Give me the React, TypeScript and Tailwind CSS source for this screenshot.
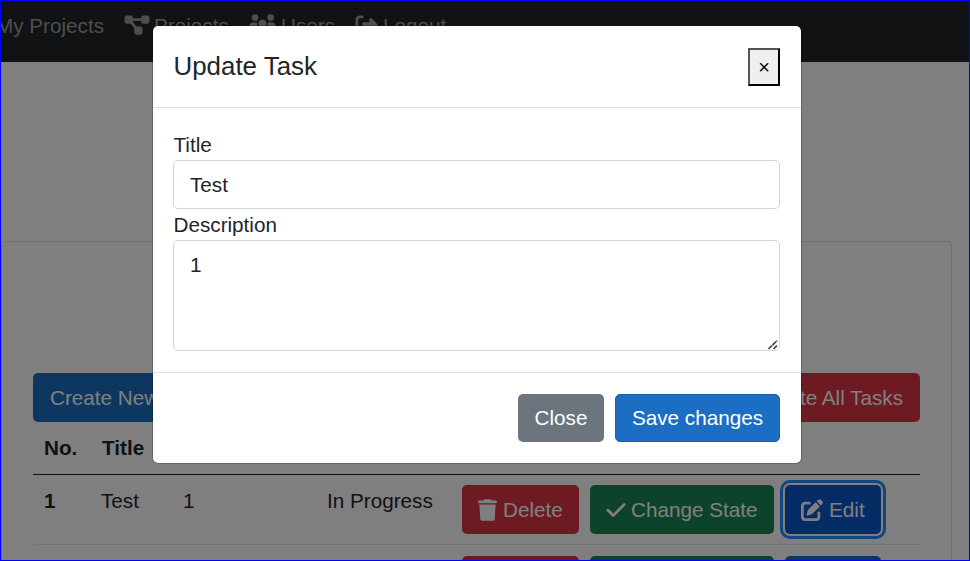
import React from "react";
import {
  FaDiagramProject,
  FaUsers,
  FaRightFromBracket,
  FaTrash,
  FaCheck,
  FaPenToSquare,
} from "react-icons/fa6";

const btn = "flex h-[49px] items-center rounded-[5px] px-[16px] whitespace-nowrap text-white";

function RowActions({ focused }: { focused?: boolean }) {
  return (
    <div className="flex gap-[11px] pt-[10px]">
      <button className={`${btn} w-[117px] bg-[#dc3545]`}>
        <FaTrash className="mr-[6px] h-[22px] w-[19px] shrink-0" />
        Delete
      </button>
      <button className={`${btn} w-[184px] bg-[#198754]`}>
        <FaCheck className="mr-[5px] h-[22px] w-[20px] shrink-0" />
        Change State
      </button>
      <button
        className={
          focused
            ? `${btn} w-[96px] bg-[#0a58ca] shadow-[0_0_0_2px_#fff,0_0_0_5px_#258cfb]`
            : `${btn} w-[96px] bg-[#1b6ec2]`
        }
      >
        <FaPenToSquare className="mr-[6px] h-[22px] w-[22px] shrink-0" />
        Edit
      </button>
    </div>
  );
}

function Page() {
  return (
    <div className="h-[561px] overflow-hidden bg-white">
      <nav className="flex h-[62px] bg-[#212529] pt-[10px] leading-[31px] text-[#9b9d9e]">
        <div className="-ml-[4px] w-[127px] shrink-0 whitespace-nowrap">My Projects</div>
        <div className="flex w-[125px] shrink-0">
          <FaDiagramProject className="mt-[4px] ml-px mr-[4px] h-[22px] w-[26px]" />
          Projects
        </div>
        <div className="flex w-[107px] shrink-0">
          <FaUsers className="mt-[4px] ml-px mr-[5px] h-[22px] w-[27px]" />
          Users
        </div>
        <div className="flex">
          <FaRightFromBracket className="mt-[4px] mr-[5px] h-[22px] w-[23px]" />
          Logout
        </div>
      </nav>
      <main className="pt-[179px]">
        <section className="ml-px h-[420px] w-[951px] rounded-[5px] border border-[#dfdfdf] px-[31px] pt-[131px]">
          <div className="flex justify-between">
            <button className={`${btn} bg-[#1b6ec2] pl-[17px]`}>Create New Task</button>
            <button className={`${btn} bg-[#dc3545] pr-[17px]`}>Delete All Tasks</button>
          </div>
          <div className="grid h-[53px] grid-cols-[58px_83px_143px_137px_466px] border-b border-[#212529] pt-[10px] leading-[31px] font-bold">
            <span className="pl-[11px]">No.</span>
            <span className="pl-[11px]">Title</span>
            <span className="pl-[9px]">Description</span>
            <span className="pl-[9px]">State</span>
            <span />
          </div>
          <div className="grid h-[70px] grid-cols-[58px_83px_143px_145px_458px] border-b border-[#dee2e6] leading-[31px]">
            <span className="pt-[10px] pl-[11px] font-bold">1</span>
            <span className="pt-[10px] pl-[10px]">Test</span>
            <span className="pt-[10px] pl-[9px]">1</span>
            <span className="pt-[10px] pl-[10px]">In Progress</span>
            <RowActions focused />
          </div>
          <div className="grid h-[71px] grid-cols-[58px_83px_143px_145px_458px]">
            <span />
            <span />
            <span />
            <span />
            <div className="pt-px">
              <RowActions />
            </div>
          </div>
        </section>
      </main>
    </div>
  );
}

function UpdateTaskModal() {
  return (
    <div className="absolute top-[25px] left-[152px] flex h-[439px] w-[650px] flex-col rounded-[6px] border border-black/20 bg-white bg-clip-padding">
      <header className="flex h-[82px] shrink-0 items-start justify-between border-b border-[#dee2e6] px-[20px] pt-[21px]">
        <h5 className="pl-[0.5px] text-[25.9px] leading-[38px]">Update Task</h5>
        <button className="mt-px mr-px flex h-[38px] w-[32px] items-center justify-center border-2 border-t-[#555] border-r-black border-b-black border-l-[#555] bg-[#efefef] text-[20px] text-black">
          ×
        </button>
      </header>
      <div className="h-[264px] shrink-0 px-[20px] pt-[21px]">
        <label className="block h-[31px] pl-[0.5px] leading-[31px]">Title</label>
        <input
          className="block h-[49px] w-[607px] rounded-[5px] border border-[#ced4da] px-[16px] outline-none"
          defaultValue="Test"
        />
        <label className="block h-[31px] pl-[0.5px] leading-[31px]">Description</label>
        <div className="relative w-[607px]">
          <textarea
            className="block h-[111px] w-full resize-none rounded-[5px] border border-[#ced4da] px-[16px] py-[8px] leading-[31px] outline-none"
            defaultValue="1"
          />
          <svg className="absolute right-[2px] bottom-[1px]" width="10" height="10" viewBox="0 0 10 10" stroke="#424242" strokeWidth="1.7">
            <path d="M0.5 9 L9 0.7 M5.5 9 L9 5.6" strokeDasharray="5 0.5" />
          </svg>
        </div>
      </div>
      <footer className="flex flex-1 justify-end gap-[11px] border-t border-[#dee2e6] pt-[21px] pr-[21px]">
        <button className="h-[48px] w-[86px] rounded-[5px] bg-[#6c757d] text-white">Close</button>
        <button className="h-[48px] w-[165px] rounded-[5px] border border-[#1861ac] bg-[#1b6ec2] whitespace-nowrap text-white">
          Save changes
        </button>
      </footer>
    </div>
  );
}

export default function App() {
  return (
    <div className="relative h-[561px] w-[970px] overflow-hidden font-['Liberation_Sans',Arial,sans-serif] text-[20.7px] text-[#212529]">
      <Page />
      <div className="absolute inset-0 bg-black/50" />
      <UpdateTaskModal />
      <div className="pointer-events-none absolute inset-0 border border-[#0000ff]" />
    </div>
  );
}
